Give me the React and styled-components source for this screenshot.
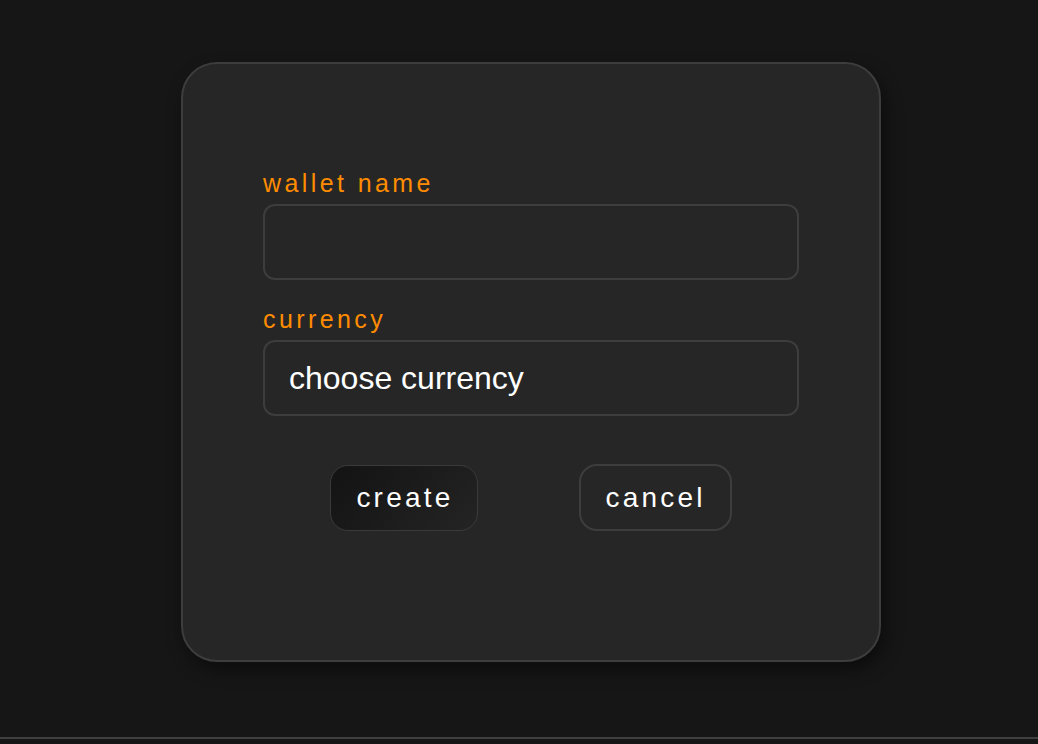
import React from "react";
import styled, { createGlobalStyle } from "styled-components";

const GlobalStyle = createGlobalStyle`
  * {
    box-sizing: border-box;
  }
  body {
    margin: 0;
    background-color: #161616;
    font-family: "Liberation Sans", Arial, sans-serif;
  }
`;

const App = () => {
  return (
    <Page>
      <GlobalStyle />
      <Main>
        <Card>
          <Field>
            <Label htmlFor="wallet-name">wallet name</Label>
            <TextInput id="wallet-name" type="text" />
          </Field>
          <Field>
            <Label htmlFor="currency">currency</Label>
            <SelectBox id="currency">choose currency</SelectBox>
          </Field>
          <ButtonRow>
            <Button $primary>create</Button>
            <Button>cancel</Button>
          </ButtonRow>
        </Card>
      </Main>
      <Footer />
    </Page>
  );
};

export default App;

const Page = styled.div`
  min-height: 744px;
  display: flex;
  flex-direction: column;
`;

const Main = styled.main`
  height: 737px;
  padding: 62px 0 0 181px;
`;

const Card = styled.div`
  width: 700px;
  height: 600px;
  padding: 104px 80px 0;
  background-color: #262626;
  border: 2px solid #3d3d3d;
  border-radius: 36px;
  box-shadow: 4px 8px 18px rgba(0, 0, 0, 0.45);
  display: flex;
  flex-direction: column;
  gap: 24px;
`;

const Field = styled.div`
  display: flex;
  flex-direction: column;
  gap: 6px;
`;

const Label = styled.label`
  display: block;
  font-size: 25px;
  line-height: 30px;
  letter-spacing: 3.4px;
  color: #ff8c00;
`;

const TextInput = styled.input`
  height: 76px;
  width: 100%;
  padding: 0 24px;
  background-color: #262626;
  border: 2px solid #3d3d3d;
  border-radius: 12px;
  color: #fff;
  font-family: "Liberation Sans", Arial, sans-serif;
  font-size: 32px;
  outline: none;
`;

const SelectBox = styled.div`
  height: 76px;
  display: flex;
  align-items: center;
  padding: 0 24px;
  border: 2px solid #3d3d3d;
  border-radius: 12px;
  color: #fff;
  font-size: 32px;
  cursor: pointer;
`;

const ButtonRow = styled.div`
  display: flex;
  justify-content: center;
  align-items: center;
  gap: 101px;
  margin-top: 24px;
`;

const Button = styled.button`
  height: ${(p) => (p.$primary ? "66px" : "67px")};
  padding: 0 24px 0 ${(p) => (p.$primary ? "25px" : "24px")};
  border-radius: 18px;
  border: ${(p) => (p.$primary ? "1px solid #3a3a3a" : "2px solid #3d3d3d")};
  background: ${(p) =>
    p.$primary ? "linear-gradient(135deg, #131313, #242424)" : "transparent"};
  color: #fff;
  font-family: "Liberation Sans", Arial, sans-serif;
  font-size: 28px;
  letter-spacing: 3.2px;
  cursor: pointer;
`;

const Footer = styled.footer`
  height: 2px;
  background-color: #3f3f3f;
`;
